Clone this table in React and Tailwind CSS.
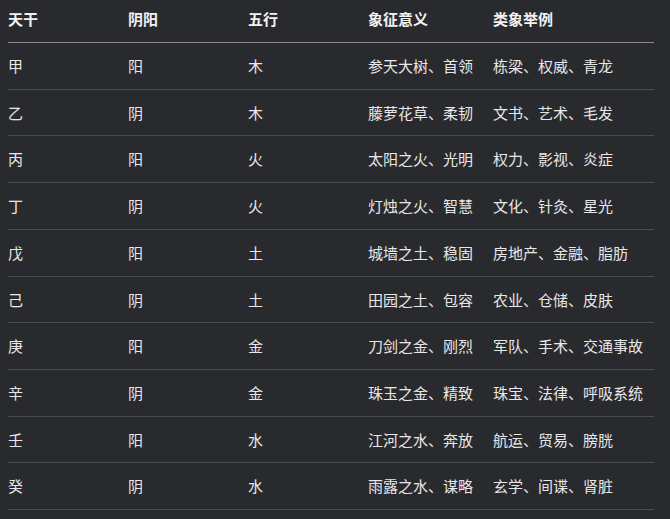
import React from "react";

const rows = [
  ["甲", "阳", "木", "参天大树、首领", "栋梁、权威、青龙"],
  ["乙", "阴", "木", "藤萝花草、柔韧", "文书、艺术、毛发"],
  ["丙", "阳", "火", "太阳之火、光明", "权力、影视、炎症"],
  ["丁", "阴", "火", "灯烛之火、智慧", "文化、针灸、星光"],
  ["戊", "阳", "土", "城墙之土、稳固", "房地产、金融、脂肪"],
  ["己", "阴", "土", "田园之土、包容", "农业、仓储、皮肤"],
  ["庚", "阳", "金", "刀剑之金、刚烈", "军队、手术、交通事故"],
  ["辛", "阴", "金", "珠玉之金、精致", "珠宝、法律、呼吸系统"],
  ["壬", "阳", "水", "江河之水、奔放", "航运、贸易、膀胱"],
  ["癸", "阴", "水", "雨露之水、谋略", "玄学、间谍、肾脏"],
];

const headers = ["天干", "阴阳", "五行", "象征意义", "类象举例"];
const widths = ["w-[120px]", "w-[120px]", "w-[120px]", "w-[125px]", "w-[161px]"];

export default function App() {
  return (
    <div
      className="w-[670px] h-[519px] bg-[#292a2e] overflow-hidden px-[8px]"
      style={{ fontFamily: '"Microsoft YaHei", "Noto Sans CJK SC", "Noto Sans", sans-serif' }}
    >
      <table className="w-[646px] border-collapse text-[15px] text-left">
        <thead>
          <tr className="border-b border-[#8c8c8c]">
            {headers.map((h, i) => (
              <th
                key={h}
                className={`${widths[i]} p-0 pt-[8px] pb-[12px] leading-[22px] font-bold text-[#f2f2f2]`}
              >
                {h}
              </th>
            ))}
          </tr>
        </thead>
        <tbody>
          {rows.map((r) => (
            <tr key={r[0]} className="border-b border-[#4b4c50]">
              {r.map((c, i) => (
                <td
                  key={i}
                  className="p-0 py-[12px] leading-[21.7px] text-[#e8e8e8] whitespace-nowrap"
                >
                  {c}
                </td>
              ))}
            </tr>
          ))}
        </tbody>
      </table>
    </div>
  );
}
